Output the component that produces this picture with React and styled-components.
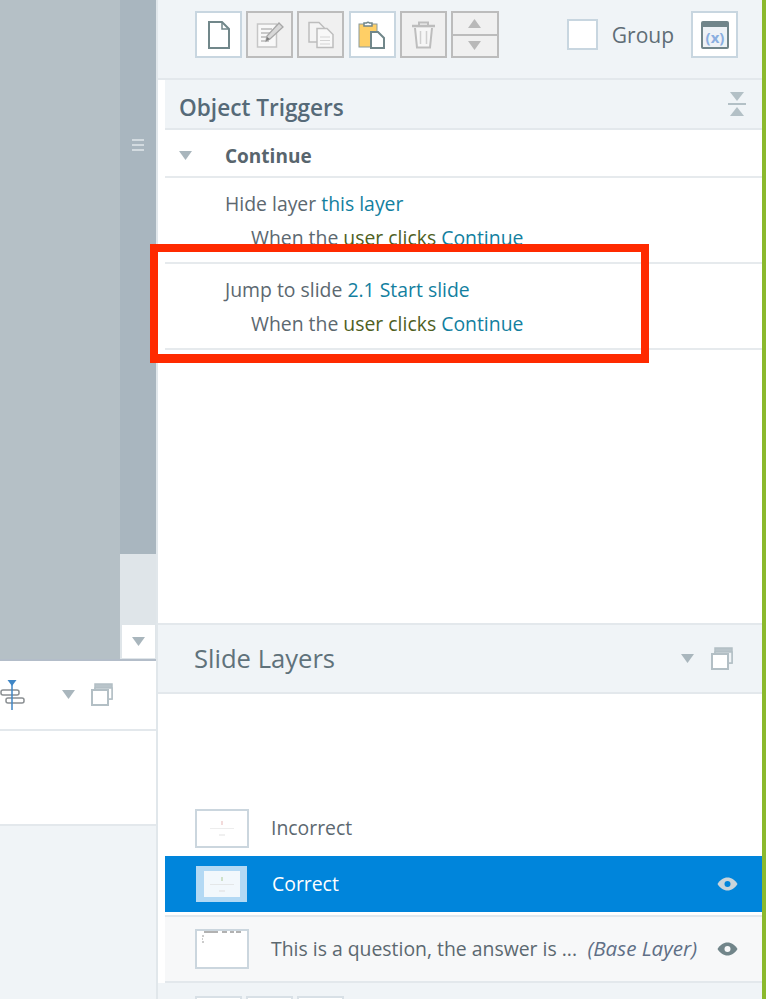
import React from 'react';
import styled, { createGlobalStyle } from 'styled-components';

const GlobalStyle = createGlobalStyle`
    html, body {
        margin: 0;
        padding: 0;
        background: #ffffff;
    }
    body {
        font-family: "Open Sans", "Noto Sans", sans-serif;
    }
`;

const Page = styled.div`
    position: relative;
    display: grid;
    grid-template-columns: 158px 604px 4px;
    width: 766px;
    height: 999px;
    overflow: hidden;
`;

const GreenEdge = styled.div`
    background: #8bb92d;
`;

/* left column */
const LeftColumn = styled.div`
    display: flex;
    flex-direction: column;
    border-right: 2px solid #e1e7eb;
    box-sizing: border-box;
`;

const Canvas = styled.div`
    display: flex;
    height: 659px;
    border-bottom: 2px solid #b3bdc9;
    box-sizing: content-box;
    flex: none;
`;

const CanvasArea = styled.div`
    width: 120px;
    background: #b5c0c6;
`;

const ScrollBar = styled.div`
    display: flex;
    flex-direction: column;
    flex: 1;
    background: #dfe5e9;
`;

const ScrollThumb = styled.div`
    display: flex;
    flex-direction: column;
    align-items: center;
    gap: 3px;
    height: 554px;
    padding-top: 139px;
    box-sizing: border-box;
    background: #a9b6bf;
`;

const ThumbLine = styled.div`
    width: 12px;
    height: 2px;
    background: #d3dbe0;
`;

const ScrollSpace = styled.div`
    flex: 1;
`;

const ScrollArrow = styled.div`
    display: flex;
    align-items: center;
    justify-content: center;
    height: 33px;
    margin: 0 1px 1px 2px;
    background: #ffffff;
`;

const LeftToolbar = styled.div`
    display: flex;
    align-items: center;
    gap: 16px;
    height: 70px;
    padding-bottom: 1px;
    box-sizing: border-box;
    border-bottom: 2px solid #e3e8ec;
    flex: none;
`;

const AlignSlot = styled.div`
    display: flex;
    width: 62px;
    margin-right: -16px;
`;

const LeftBlank = styled.div`
    height: 95px;
    box-sizing: border-box;
    border-bottom: 2px solid #e3e8ec;
    flex: none;
`;

const LeftFooter = styled.div`
    flex: 1;
    background: #f0f4f7;
`;

/* right column */
const RightColumn = styled.div`
    display: flex;
    flex-direction: column;
    min-width: 0;
`;

const TopBar = styled.div`
    display: flex;
    align-items: center;
    height: 80px;
    padding: 0 24px 9px 37px;
    box-sizing: border-box;
    background: #f0f4f7;
    border-bottom: 2px solid #e3e8ec;
    flex: none;
`;

const ToolGroup = styled.div`
    display: flex;
    gap: 4.2px;
`;

const ToolButton = styled.div`
    display: flex;
    align-items: center;
    justify-content: center;
    width: 47px;
    height: 47px;
    box-sizing: border-box;
    background: ${p => (p.$disabled ? '#f0f0f0' : '#ffffff')};
    border: 2px solid ${p => (p.$disabled ? '#bcbcbc' : '#c8d6e0')};
`;

const StackButton = styled.div`
    display: flex;
    flex-direction: column;
    width: 48px;
    height: 47px;
    box-sizing: border-box;
    background: #f0f0f0;
    border: 2px solid #bcbcbc;
`;

const StackHalf = styled.div`
    display: flex;
    flex: 1;
    align-items: center;
    justify-content: center;
    & + & {
        border-top: 2px solid #bcbcbc;
    }
`;

const GroupCheck = styled.div`
    width: 31px;
    height: 31px;
    margin-left: auto;
    box-sizing: border-box;
    background: #ffffff;
    border: 2px solid #c8d6e0;
`;

const GroupLabel = styled.span`
    margin: 0 17px 0 14px;
    font-size: 21px;
    color: #5f6d76;
`;

const Body = styled.div`
    display: flex;
    flex-direction: column;
    flex: 1;
    min-height: 0;
`;

const TriggerPanel = styled.div`
    height: 543px;
    margin-left: 7px;
    flex: none;
`;

const PanelHeader = styled.div`
    display: flex;
    align-items: center;
    justify-content: space-between;
    height: 50px;
    padding: 0 16px 0 14px;
    box-sizing: border-box;
    background: #f0f4f7;
    border-bottom: 2px solid #e3e8ec;
    font-size: 22.6px;
    font-weight: 600;
    color: #566a78;
`;

const PanelTitle = styled.span`
    padding-top: 6px;
`;

const ObjectRow = styled.div`
    display: flex;
    align-items: center;
    height: 48px;
    padding: 5px 0 0 14px;
    box-sizing: border-box;
    border-bottom: 2px solid #e6eaed;
    font-size: 19px;
    font-weight: 700;
    color: #58656d;
`;

const ObjectName = styled.span`
    margin-left: 33px;
`;

const TriggerRow = styled.div`
    display: flex;
    flex-direction: column;
    height: 86px;
    padding: 9px 0 0 60px;
    box-sizing: border-box;
    border-bottom: 2px solid #e6eaed;
    font-size: 19.4px;
    line-height: 34px;
    color: #5c6870;
`;

const Condition = styled.div`
    padding-left: 26px;
`;

const LinkWord = styled.span`
    color: #137f9f;
`;

const UserWord = styled.span`
    color: #4f5f1f;
`;

const LayersHeader = styled.div`
    display: flex;
    align-items: center;
    gap: 17px;
    height: 71px;
    padding: 0 29px 1px 36px;
    box-sizing: border-box;
    background: #f0f4f7;
    border-top: 2px solid #e3e8ec;
    border-bottom: 2px solid #e3e8ec;
    color: #60727b;
    flex: none;
`;

const LayersTitle = styled.span`
    margin-right: auto;
    font-size: 25.6px;
`;

const LayerList = styled.div`
    display: flex;
    flex-direction: column;
    justify-content: flex-end;
    flex: 1;
    min-height: 0;
    margin-left: 7px;
`;

const LayerRow = styled.div`
    display: flex;
    align-items: center;
    flex: none;
    height: ${p => p.$height}px;
    padding: ${p => (p.$active ? '0 24px 0 31px' : '0 24px 0 30px')};
    box-sizing: border-box;
    font-size: 19.4px;
    background: ${p => (p.$active ? '#0085db' : p.$base ? '#f7f8f9' : 'transparent')};
    color: ${p => (p.$active ? '#ffffff' : '#5c6870')};
    border-top: ${p => (p.$base ? '2px solid #e3e8ec' : 'none')};
    border-bottom: ${p => (p.$base ? '2px solid #e3e8ec' : 'none')};
    margin-top: ${p => (p.$base ? '3px' : '0')};
`;

const Thumb = styled.div`
    display: flex;
    flex-direction: column;
    align-items: center;
    justify-content: center;
    width: ${p => (p.$active ? '51px' : '54px')};
    height: ${p => p.$tall}px;
    box-sizing: border-box;
    background: ${p => (p.$active ? '#b3d9f4' : '#ffffff')};
    border: 2px solid ${p => (p.$active ? '#b3d9f4' : '#cbd6de')};
    flex: none;
`;

const LayerName = styled.span`
    margin: 0 auto 2px ${p => (p.$active ? '25px' : '22px')};
    white-space: nowrap;
`;

const BaseTag = styled.span`
    margin: 0 20px 2px 0;
    font-size: 20.6px;
    font-style: italic;
    color: #5f6f86;
`;

const Footer = styled.div`
    display: flex;
    gap: 4px;
    flex: none;
    height: 16px;
    padding: 13px 0 0 37px;
    box-sizing: border-box;
    background: #f0f4f7;
`;

const FooterTab = styled.div`
    width: 47px;
    height: 10px;
    background: #ffffff;
    border: 2px solid #d8e0e6;
    box-sizing: border-box;
`;

const RedBox = styled.div`
    position: absolute;
    left: 150px;
    top: 244px;
    width: 499px;
    height: 119px;
    box-sizing: border-box;
    border: 8px solid #ff2a00;
    border-bottom-width: 9px;
`;

/* icons */
const Arrow = ({ up, color = '#a9b6bd', w = 13, h = 9 }) => (
    <svg width={w} height={h} viewBox="0 0 13 9">
        <path d={up ? 'M6.5 0L13 9H0z' : 'M0 0h13L6.5 9z'} fill={color} />
    </svg>
);

const NewIcon = () => (
    <svg width="24" height="30" viewBox="0 0 24 30" fill="none">
        <path d="M2 2h13l7 7v19H2z" fill="#fff" stroke="#71878a" strokeWidth="2" />
        <path d="M15 2v7h7" stroke="#71878a" strokeWidth="1.5" />
    </svg>
);

const EditIcon = () => (
    <svg width="28" height="28" viewBox="0 0 28 28" fill="none">
        <rect x="1.5" y="3" width="19" height="23" fill="#f8f8f8" stroke="#c6c6c6" strokeWidth="1.5" />
        <path d="M5 8h11M5 12h9M5 16h6M5 20h8" stroke="#b9b9b9" strokeWidth="1.5" />
        <path d="M10 20l1-5L23 2l4 4-13 12z" fill="#d8d8d8" stroke="#a7a7a7" strokeWidth="1.3" />
        <path d="M10 20l1-4 3 2z" fill="#7d7d7d" />
    </svg>
);

const CopyIcon = () => (
    <svg width="28" height="28" viewBox="0 0 28 28" fill="none">
        <path d="M2 1.5h10l5 5V21H2z" fill="#f4f4f4" stroke="#bdbdbd" strokeWidth="1.5" />
        <path d="M10 7.5h10l6 6v13H10z" fill="#f8f8f8" stroke="#bdbdbd" strokeWidth="1.5" />
        <path d="M13 16h10M13 19.500h10M13 23h10" stroke="#d4d4d4" />
    </svg>
);

const PasteIcon = () => (
    <svg width="28" height="29" viewBox="0 0 28 29" fill="none">
        <rect x="1" y="4" width="18" height="23" fill="#ffcf66" stroke="#8a9a9c" strokeWidth="1" />
        <path d="M6 6V3h2.500a2 2 0 0 1 3 0H14v3z" fill="#fff" stroke="#71878a" strokeWidth="1.500" />
        <path d="M13 12h7l6 6v10H13z" fill="#fff" stroke="#71878a" strokeWidth="2" />
    </svg>
);

const TrashIcon = () => (
    <svg width="25" height="28" viewBox="0 0 25 28" fill="none">
        <path d="M1 5h23" stroke="#bdbdbd" strokeWidth="2.500" />
        <path d="M8 4V1.500h9V4" stroke="#bdbdbd" strokeWidth="2" />
        <path d="M4 7l2 19.500h13L21 7" stroke="#bdbdbd" strokeWidth="2" fill="#f6f6f6" />
        <path d="M9.500 10v13M15.500 10v13" stroke="#cfcfcf" strokeWidth="1.500" />
    </svg>
);

const VariableIcon = () => (
    <svg width="28" height="28" viewBox="0 0 28 28">
        <rect width="28" height="28" rx="2" fill="#71858a" />
        <rect x="2" y="6" width="24" height="20" fill="#eef2f6" />
        <text x="14" y="21.500" textAnchor="middle" fontFamily="Open Sans, sans-serif" fontSize="15" fontWeight="700" fill="#8aaee0">(x)</text>
    </svg>
);

const CollapseIcon = () => (
    <svg width="18" height="24" viewBox="0 0 18 24">
        <path d="M2 0h14l-7 9z" fill="#b3c0c6" />
        <rect y="11" width="18" height="2" fill="#b3c0c6" />
        <path d="M9 15l7 9H2z" fill="#b3c0c6" />
    </svg>
);

const WindowsIcon = ({ back = '#f0f4f7' }) => (
    <svg width="22" height="23" viewBox="0 0 22 23" fill="none">
        <rect x="4" y="1" width="17" height="15" fill="#b9c4ca" stroke="#b3bfc5" strokeWidth="1.500" />
        <rect x="4" y="5" width="17" height="11" fill={back} stroke="#b3bfc5" strokeWidth="1.500" />
        <rect x="1" y="7" width="16" height="15" fill="#ffffff" stroke="#b3bfc5" strokeWidth="2" />
    </svg>
);

const AlignIcon = () => (
    <svg width="26" height="30" viewBox="0 0 26 30" fill="none">
        <rect x="1" y="10" width="18" height="5" rx="2" stroke="#8a8f92" strokeWidth="1.500" />
        <rect x="6" y="18" width="18" height="5" rx="2" stroke="#8a8f92" strokeWidth="1.500" />
        <path d="M12 2v28" stroke="#3f86c6" strokeWidth="1.500" />
        <path d="M7.500 0h9L12 6z" fill="#3f86c6" />
    </svg>
);

const EyeIcon = ({ color, pupil }) => (
    <svg width="21" height="14" viewBox="0 0 21 14">
        <path d="M0.500 7C3 3 6.500 0.500 10.500 0.500S18 3 20.500 7C18 11 14.500 13.500 10.500 13.500S3 11 0.500 7z" fill={color} />
        <circle cx="10.500" cy="7" r="3" fill={pupil} />
    </svg>
);

const SlideSketch = ({ mark, opacity = 1, fill = '#ffffff' }) => (
    <svg width="36" height="26" viewBox="0 0 36 26">
        <rect width="36" height="26" fill={fill} />
        <g opacity={opacity}>
            <rect x="17" y="6" width="2" height="4" fill={mark} />
            <rect x="6" y="13" width="24" height="1" fill="#dcdcdc" />
            <rect x="15" y="19" width="6" height="2" fill="#e2e2e2" />
        </g>
    </svg>
);

const QuestionSketch = () => (
    <svg width="50" height="36" viewBox="0 0 50 36">
        <path d="M7 1h14M25 1h5M33 1h4M39 1h5" stroke="#666666" strokeWidth="1.200" />
        <path d="M5 5h2M5 8h1M5 11h2" stroke="#999999" />
    </svg>
);

const trigger = (action, target) => (
    <TriggerRow>
        <div>{action} <LinkWord>{target}</LinkWord></div>
        <Condition>
            When the <UserWord>user clicks</UserWord> <LinkWord>Continue</LinkWord>
        </Condition>
    </TriggerRow>
);

export default function App() {
    return (
        <Page>
            <GlobalStyle />
            <LeftColumn>
                <Canvas>
                    <CanvasArea />
                    <ScrollBar>
                        <ScrollThumb>
                            <ThumbLine />
                            <ThumbLine />
                            <ThumbLine />
                        </ScrollThumb>
                        <ScrollSpace />
                        <ScrollArrow><Arrow /></ScrollArrow>
                    </ScrollBar>
                </Canvas>
                <LeftToolbar>
                    <AlignSlot><AlignIcon /></AlignSlot>
                    <Arrow />
                    <WindowsIcon back="#ffffff" />
                </LeftToolbar>
                <LeftBlank />
                <LeftFooter />
            </LeftColumn>

            <RightColumn>
                <TopBar>
                    <ToolGroup>
                        <ToolButton><NewIcon /></ToolButton>
                        <ToolButton $disabled><EditIcon /></ToolButton>
                        <ToolButton $disabled><CopyIcon /></ToolButton>
                        <ToolButton><PasteIcon /></ToolButton>
                        <ToolButton $disabled><TrashIcon /></ToolButton>
                        <StackButton>
                            <StackHalf><Arrow up color="#b9b9b9" /></StackHalf>
                            <StackHalf><Arrow color="#b9b9b9" /></StackHalf>
                        </StackButton>
                    </ToolGroup>
                    <GroupCheck />
                    <GroupLabel>Group</GroupLabel>
                    <ToolButton><VariableIcon /></ToolButton>
                </TopBar>

                <Body>
                    <TriggerPanel>
                        <PanelHeader>
                            <PanelTitle>Object Triggers</PanelTitle>
                            <CollapseIcon />
                        </PanelHeader>
                        <ObjectRow>
                            <Arrow />
                            <ObjectName>Continue</ObjectName>
                        </ObjectRow>
                        {trigger('Hide layer', 'this layer')}
                        {trigger('Jump to slide', '2.1 Start slide')}
                    </TriggerPanel>

                    <LayersHeader>
                        <LayersTitle>Slide Layers</LayersTitle>
                        <Arrow />
                        <WindowsIcon />
                    </LayersHeader>

                    <LayerList>
                        <LayerRow $height={56}>
                            <Thumb $tall={39}><SlideSketch mark="#e9b9b9" opacity={0.5} /></Thumb>
                            <LayerName>Incorrect</LayerName>
                        </LayerRow>
                        <LayerRow $active $height={56}>
                            <Thumb $active $tall={36}><SlideSketch mark="#b9d2a9" opacity={0.6} fill="#f2f8fc" /></Thumb>
                            <LayerName $active>Correct</LayerName>
                            <EyeIcon color="#c9d4da" pupil="#0085db" />
                        </LayerRow>
                        <LayerRow $base $height={68}>
                            <Thumb $tall={40}><QuestionSketch /></Thumb>
                            <LayerName>This is a question, the answer is ...</LayerName>
                            <BaseTag>(Base Layer)</BaseTag>
                            <EyeIcon color="#71858a" pupil="#f7f8f9" />
                        </LayerRow>
                    </LayerList>

                    <Footer>
                        <FooterTab />
                        <FooterTab />
                        <FooterTab />
                    </Footer>
                </Body>
            </RightColumn>
            <GreenEdge />
            <RedBox />
        </Page>
    );
}
